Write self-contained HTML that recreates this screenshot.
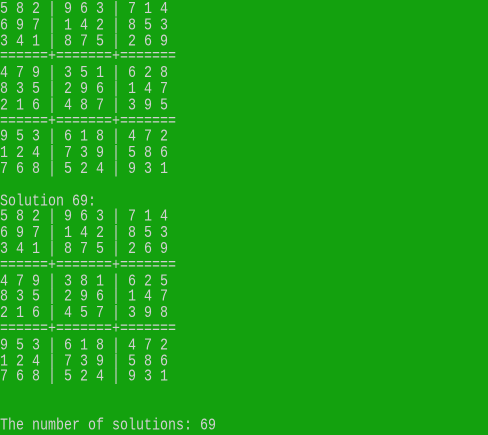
<!DOCTYPE html>
<html><head><meta charset="utf-8"><style>
html,body{margin:0;padding:0;background:#13a10e;width:488px;height:435px;overflow:hidden}
pre{margin:0;position:absolute;left:0;top:3px;font-family:"Liberation Mono",monospace;font-size:13.33px;line-height:12.8px;color:#d0d0d0;white-space:pre;transform:scaleY(1.25);transform-origin:0 0}
</style></head><body><pre>5 8 2 | 9 6 3 | 7 1 4
6 9 7 | 1 4 2 | 8 5 3
3 4 1 | 8 7 5 | 2 6 9
======+=======+=======
4 7 9 | 3 5 1 | 6 2 8
8 3 5 | 2 9 6 | 1 4 7
2 1 6 | 4 8 7 | 3 9 5
======+=======+=======
9 5 3 | 6 1 8 | 4 7 2
1 2 4 | 7 3 9 | 5 8 6
7 6 8 | 5 2 4 | 9 3 1

Solution 69:
5 8 2 | 9 6 3 | 7 1 4
6 9 7 | 1 4 2 | 8 5 3
3 4 1 | 8 7 5 | 2 6 9
======+=======+=======
4 7 9 | 3 8 1 | 6 2 5
8 3 5 | 2 9 6 | 1 4 7
2 1 6 | 4 5 7 | 3 9 8
======+=======+=======
9 5 3 | 6 1 8 | 4 7 2
1 2 4 | 7 3 9 | 5 8 6
7 6 8 | 5 2 4 | 9 3 1


The number of solutions: 69</pre></body></html>
